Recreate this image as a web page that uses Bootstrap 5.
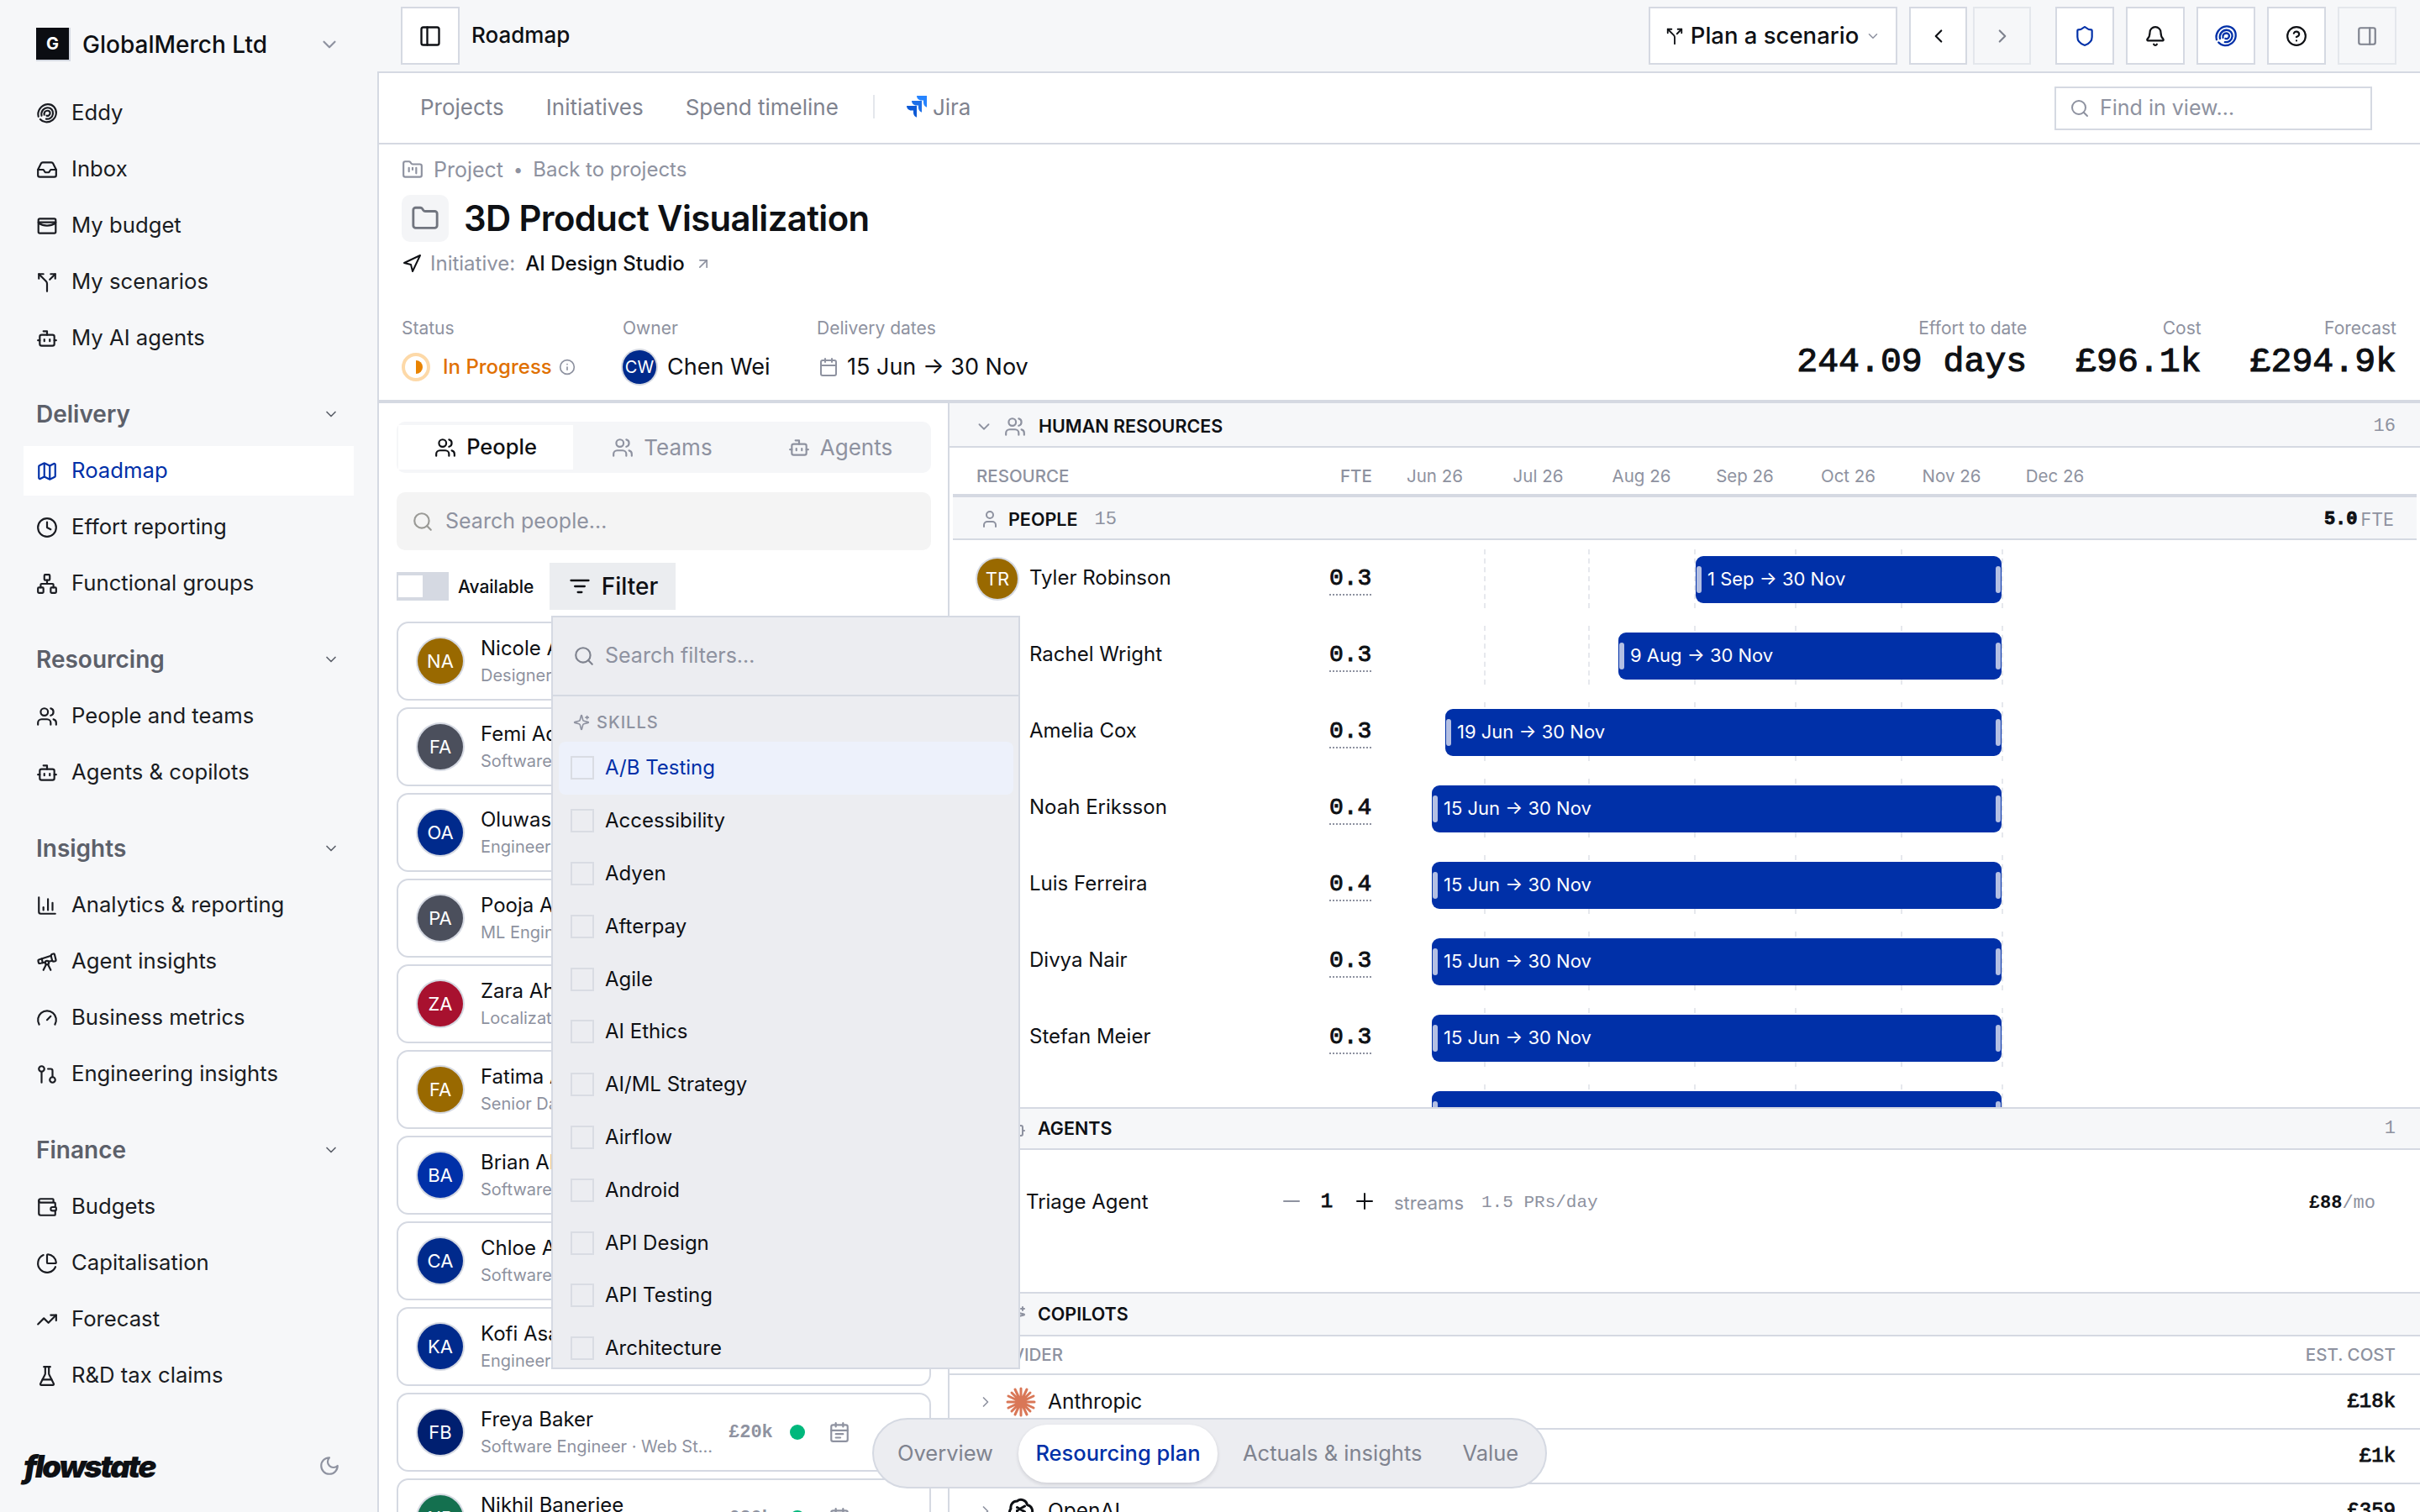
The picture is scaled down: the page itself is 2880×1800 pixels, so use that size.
<!DOCTYPE html>
<html lang="en">
<head>
  <meta charset="UTF-8">
  <meta name="viewport" content="width=device-width, initial-scale=1.0">
  <title>Roadmap - 3D Product Visualization</title>
  <link href="https://cdn.jsdelivr.net/npm/bootstrap@5.3.2/dist/css/bootstrap.min.css" rel="stylesheet">
  <style>
    html, body { height: 100%; }
    body { font-family: "Inter", "Liberation Sans", sans-serif; color: #0e1014; background: #f6f7f9; overflow: hidden; font-size: 25.7px; }
    .ico { fill: none; stroke: currentColor; stroke-width: 2; stroke-linecap: round; stroke-linejoin: round; flex: none; }
    .mono { font-family: "Liberation Mono", monospace; }
    .mono-strong { font-family: "Liberation Mono", monospace; -webkit-text-stroke: .9px currentColor; }
    .muted { color: #8e92a0; }
    .app { height: 1800px; position: relative; }

    /* sidebar */
    .side { width: 449px; flex: none; padding: 0 28px; height: 1800px; }
    .brand { height: 105px; padding-left: 15px; font-size: 28px; font-weight: 500; padding-right: 16px; }
    .brand-box { width: 41px; height: 40px; background: #0b0d12; color: #fff; font-size: 20px; font-weight: 700; border: 2px solid #d5d9e2; border-top: 0; border-left: 0; margin-right: 14px; }
    .side-item { height: 59px; margin-bottom: 8px; padding-left: 15px; gap: 16px; color: #1a1c22; text-decoration: none; }
    .side-item.on { background: #fff; color: #0030a8; }
    .side-head { height: 59px; margin: 23px 0 9px; padding: 0 17px 0 15px; font-size: 28px; font-weight: 600; color: #5c606a; }
    .logo { font-size: 37px; font-weight: 900; font-style: italic; letter-spacing: -2.6px; line-height: 1; }
    .side-foot { margin-top: auto; height: 110px; padding: 0 16px 0 0; }

    /* top */
    .top { height: 87px; border-bottom: 2px solid #d5d9e2; padding: 0 28px; }
    .tool { width: 70px; height: 69px; padding: 0; border: 2px solid #d5d9e2; border-radius: 0; background: #fff; color: #0e1014; }
    .tool.off { background: #f6f7f9; color: #7f838f; border-color: #e4e7ec; }
    .tool.blue { color: #0030a8; }
    .tool-group { gap: 14px; }
    .step-group { gap: 7px; }
    .step-group .tool { width: 69px; }
    .plan { width: 296px; height: 69px; border: 2px solid #d5d9e2; border-radius: 0; background: #fff; font-size: 27.5px; font-weight: 500; color: #0e1014; padding: 0; gap: 8px; }
    .content { background: #fff; border-left: 2px solid #d5d9e2; height: 1713px; }
    .tabs { height: 85px; border-bottom: 2px solid #d5d9e2; padding: 0 57px 3px 49px; color: #7f838f; gap: 50px; font-size: 26px; }
    .find { width: 378px; height: 52px; border: 2px solid #d5d9e2; padding-left: 16px; gap: 12px; color: #8e92a0; margin-top: 3px; }
    .find-input { border: 0; padding: 0; font-size: 25px; box-shadow: none !important; background: transparent; }
    .find-input::placeholder, .people-input::placeholder, .pop-input::placeholder { color: #8e92a0; opacity: 1; }

    /* page head */
    .head { height: 308px; border-bottom: 4px solid #d5d9e2; padding: 16px 28px 0 27px; position: relative; }
    .crumb { height: 28px; font-size: 24px; line-height: 28px; color: #8e92a0; }
    .title-box { width: 56px; height: 56px; background: #f4f5f7; border-radius: 10px; color: #71757f; }
    .title-text { font-size: 41.8px; font-weight: 600; letter-spacing: -.6px; margin: 0; line-height: 56px; }
    .lbl { font-size: 21px; color: #8e92a0; line-height: 26px; }
    .val { font-size: 27px; height: 48px; }
    .stat { font-size: 41.5px; line-height: 48px; margin-top: 3px; -webkit-text-stroke-width: 1.1px; }
    .round-av { border-radius: 50%; color: #fff; box-shadow: 0 0 0 2px #d5d9e2; flex: none; }

    /* split */
    .split { position: relative; height: 1320px; }
    .left { width: 679px; flex: none; border-right: 2px solid #d5d9e2; padding: 22px 20px 0 21px; overflow: hidden; }
    .seg { height: 61px; background: #f5f6f8; border-radius: 10px; padding: 4px 2px; font-size: 26px; color: #8e92a0; }
    .seg > div { flex: 1; gap: 12px; }
    .seg .on { background: #fff; color: #0e1014; font-weight: 500; flex: none; width: 208px; font-size: 25.5px; }
    .people-search { height: 69px; background: #f4f4f4; border-radius: 10px; margin-top: 23px; padding-left: 18px; gap: 14px; color: #9a9a96; }
    .people-input { border: 0; background: transparent; font-size: 25px; padding: 0; box-shadow: none !important; }
    .avail-toggle { width: 62px; height: 34px; background: #d5d9e2; padding: 4px 0 4px 2px; }
    .avail-toggle i { display: block; width: 29px; height: 26px; background: #fff; }
    .filter-btn { width: 150px; height: 56px; background: #ebedf0; border: 0; border-radius: 0; font-size: 28px; font-weight: 500; gap: 12px; padding: 0; color: #0e1014; }
    .p-card { height: 94px; border: 2px solid #d5d9e2; border-radius: 14px; margin-bottom: 8px; padding: 0 0 0 23px; flex-direction: row; align-items: center; }
    .p-av { width: 54px; height: 54px; font-size: 22px; }
    .p-name { font-size: 24px; line-height: 34px; white-space: nowrap; }
    .p-sub { font-size: 20px; line-height: 30px; color: #8e92a0; white-space: nowrap; }
    .p-meta { position: absolute; left: 393px; top: 0; bottom: 0; width: 160px; gap: 20px; }
    .p-dot { width: 18px; height: 18px; border-radius: 50%; background: #00b87c; }

    /* popover */
    .pop { position: absolute; left: 205px; top: 253px; width: 558px; height: 897px; background: #ecedf1; border: 2px solid #d5d9e2; z-index: 5; overflow: hidden; }
    .pop-search { height: 94px; border-bottom: 2px solid #d5d9e2; padding-left: 24px; gap: 12px; color: #7f838f; }
    .pop-input { border: 0; background: transparent; font-size: 25px; padding: 0; box-shadow: none !important; }
    .pop-head { height: 54px; padding: 7px 0 0 24px; font-size: 20px; font-weight: 500; letter-spacing: 1px; color: #8e92a0; gap: 8px; }
    .pop-row { height: 62.8px; padding-left: 14px; margin: 0 6px 0 7px; gap: 13px; font-size: 24px; border-radius: 8px; }
    .pop-row.on { color: #0030a8; background: #edf1fb; }
    .pop-check { width: 28px; height: 28px; border: 2px solid #d9dce3; }

    /* gantt */
    .right { min-width: 0; overflow: hidden; }
    .res-head { height: 53px; background: #f6f7f9; border-bottom: 2px solid #d5d9e2; padding: 4px 29px 0 30px; font-size: 21.5px; font-weight: 600; }
    .res-count { font-size: 22px; font-weight: 400; color: #8e92a0; }
    .col-head { height: 59px; margin: 0 4px; border-bottom: 4px solid #d5d9e2; padding: 14px 0 0 28px; font-size: 20.5px; color: #8e92a0; font-weight: 500; }
    .month { width: 123px; text-align: center; font-weight: 400; font-size: 20.5px; flex: none; }
    .sub-head { height: 51px; margin: 0 4px; background: #f6f7f9; border-bottom: 2px solid #d5d9e2; padding: 3px 27px 0 32px; font-size: 21.5px; font-weight: 600; }
    .rows { height: 675px; overflow: hidden; padding: 11px 4px 0; }
    .g-row { height: 70px; margin-bottom: 21px; padding-left: 29px; }
    .g-name { width: 419px; gap: 14px; flex: none; font-size: 24px; }
    .g-name > span { margin-top: -3px; }
    .g-av { width: 48px; height: 48px; font-size: 22px; }
    .g-fte { width: 50px; margin: 2px 12px 0 0; font-size: 28px; line-height: 36px; border-bottom: 2px dotted #8e92a0; flex: none; }
    .track { position: relative; height: 70px; }
    .track > span { display: block; height: 70px; border-right: 2px dashed #e6e8ed; flex: none; }
    .bar { position: absolute; top: 8px; height: 56px; background: #0030a8; color: #fff; border-radius: 9px; font-size: 22px; padding: 0 0 2px 14px; display: flex; align-items: center; white-space: nowrap; }
    .bar::before, .bar::after { content: ""; position: absolute; top: 12px; height: 32px; width: 6px; border-radius: 3px; background: #b3bfe3; }
    .bar::before { left: 1px; }
    .bar::after { right: 1px; }
    .sec-head { height: 53px; background: #f6f7f9; border-top: 2px solid #d5d9e2; border-bottom: 2px solid #d5d9e2; padding: 0 29px 0 67px; font-size: 21.5px; font-weight: 600; }
    .sec-head.first { height: 51px; }
    .agent-row { height: 169px; padding: 44px 29px 0 91px; font-size: 24px; }
    .agent-name { width: 304px; }
    .prov-head { height: 46px; border-bottom: 2px solid #d5d9e2; padding: 0 29px 0 33px; font-size: 20.5px; color: #8e92a0; font-weight: 500; }
    .prov-row { height: 65px; border-bottom: 2px solid #d5d9e2; padding: 0 29px 0 33px; font-size: 24.5px; }
    .prov-cost { font-size: 24px; }

    /* bottom pill */
    .pill { position: absolute; left: 1038px; top: 1688px; width: 803px; height: 84px; border-radius: 42px; background: #ecedf1; border: 2px solid #d5d9e2; z-index: 6; padding-left: 28px; font-size: 25.5px; color: #7f838f; white-space: nowrap; }
    .pill-on { width: 237px; height: 69px; background: #fff; color: #0030a8; font-weight: 500; font-size: 25.5px; border-radius: 34px; box-shadow: 0 2px 4px rgba(20, 24, 40, .14); margin: 0 30px 0 30px; flex: none; }
  </style>
</head>
<body>
  <svg width="0" height="0" class="position-absolute">
    <symbol id="i-eddy" viewBox="0 0 24 24"><path d="M2.5 15.5C1 10 5 2.500 12.500 2c6-.4 10 4.500 9.500 10-.5 6-6 10-11.500 9.500-2.500-.2-4.500-1.300-6-3"/><path d="M6 14.500C5 10 8 6 12.500 5.800c4-.2 6.300 3 6 6.500-.4 4-4 6.300-7.500 5.800"/><path d="M9 13.500c-.6-2.500 1-4.500 3.500-4.500 2 0 3 1.500 2.800 3.200-.2 2-2.300 2.800-3.800 2.300"/></symbol>
    <symbol id="i-inbox" viewBox="0 0 24 24"><path d="M22 12h-6l-2 3h-4l-2-3H2"/><path d="M5.45 5.11 2 12v6a2 2 0 0 0 2 2h16a2 2 0 0 0 2-2v-6l-3.45-6.89A2 2 0 0 0 16.76 4H7.24a2 2 0 0 0-1.79 1.11z"/></symbol>
    <symbol id="i-budget" viewBox="0 0 24 24"><rect x="2.5" y="4" width="19" height="16" rx="1.5"/><path d="M2.5 8h19"/><path d="M3 9c5 3.5 13 3.5 18 0"/></symbol>
    <symbol id="i-split" viewBox="0 0 24 24"><path d="M16 3h5v5"/><path d="M8 3H3v5"/><path d="M12 22v-8.3a4 4 0 0 0-1.172-2.872L3 3"/><path d="m15 9 6-6"/></symbol>
    <symbol id="i-bot" viewBox="0 0 24 24"><path d="M12 8V4H8"/><rect x="4" y="8" width="16" height="12" rx="2"/><path d="M2 14h2"/><path d="M20 14h2"/><path d="M15 13v2"/><path d="M9 13v2"/></symbol>
    <symbol id="i-map" viewBox="0 0 24 24"><path d="M14.106 5.553a2 2 0 0 0 1.788 0l3.659-1.83A1 1 0 0 1 21 4.619v12.764a1 1 0 0 1-.553.894l-4.553 2.277a2 2 0 0 1-1.788 0l-4.212-2.106a2 2 0 0 0-1.788 0l-3.659 1.83A1 1 0 0 1 3 19.381V6.618a1 1 0 0 1 .553-.894l4.553-2.277a2 2 0 0 1 1.788 0z"/><path d="M15 5.764v15"/><path d="M9 3.236v15"/></symbol>
    <symbol id="i-clock" viewBox="0 0 24 24"><circle cx="12" cy="12" r="10"/><path d="M12 6v6l4 2"/></symbol>
    <symbol id="i-network" viewBox="0 0 24 24"><rect x="16" y="16" width="6" height="6" rx="1"/><rect x="2" y="16" width="6" height="6" rx="1"/><rect x="9" y="2" width="6" height="6" rx="1"/><path d="M5 16v-3a1 1 0 0 1 1-1h12a1 1 0 0 1 1 1v3"/><path d="M12 12V8"/></symbol>
    <symbol id="i-users" viewBox="0 0 24 24"><path d="M16 21v-2a4 4 0 0 0-4-4H6a4 4 0 0 0-4 4v2"/><circle cx="9" cy="7" r="4"/><path d="M22 21v-2a4 4 0 0 0-3-3.87"/><path d="M16 3.13a4 4 0 0 1 0 7.75"/></symbol>
    <symbol id="i-chart" viewBox="0 0 24 24"><path d="M3 3v16a2 2 0 0 0 2 2h16"/><path d="M18 17V9"/><path d="M13 17V5"/><path d="M8 17v-3"/></symbol>
    <symbol id="i-scope" viewBox="0 0 24 24"><path d="m10.065 12.493-6.18 1.318a.934.934 0 0 1-1.108-.702l-.537-2.15a1.07 1.07 0 0 1 .691-1.265l13.504-4.44"/><path d="m13.56 11.747 4.332-.924"/><path d="m16 21-3.105-6.21"/><path d="M16.485 5.94a2 2 0 0 1 1.455-2.425l1.09-.272a1 1 0 0 1 1.212.727l1.515 6.06a1 1 0 0 1-.727 1.213l-1.09.272a2 2 0 0 1-2.425-1.455z"/><path d="m6.158 8.633 1.114 4.456"/><path d="m8 21 3.105-6.21"/><circle cx="12" cy="13" r="2"/></symbol>
    <symbol id="i-gauge" viewBox="0 0 24 24"><path d="m12 14 4-4"/><path d="M3.34 19a10 10 0 1 1 17.32 0"/></symbol>
    <symbol id="i-pull" viewBox="0 0 24 24"><circle cx="6" cy="6" r="3"/><path d="M6 9v12"/><path d="M13 6h3a2 2 0 0 1 2 2v7"/><circle cx="18" cy="18" r="3"/></symbol>
    <symbol id="i-wallet" viewBox="0 0 24 24"><path d="M19 7V4a1 1 0 0 0-1-1H5a2 2 0 0 0 0 4h15a1 1 0 0 1 1 1v4h-3a2 2 0 0 0 0 4h3a1 1 0 0 0 1-1v-2a1 1 0 0 0-1-1"/><path d="M3 5v14a2 2 0 0 0 2 2h15a1 1 0 0 0 1-1v-4"/></symbol>
    <symbol id="i-pie" viewBox="0 0 24 24"><path d="M21 12c.552 0 1.005-.449.95-.998a10 10 0 0 0-8.953-8.951c-.55-.055-.998.398-.998.95v8a1 1 0 0 0 1 1z"/><path d="M21.21 15.89A10 10 0 1 1 8 2.83"/></symbol>
    <symbol id="i-trend" viewBox="0 0 24 24"><path d="M16 7h6v6"/><path d="m22 7-8.5 8.5-5-5L2 17"/></symbol>
    <symbol id="i-flask" viewBox="0 0 24 24"><path d="M10 2v7.527a2 2 0 0 1-.211.896L4.72 20.55a1 1 0 0 0 .9 1.45h12.76a1 1 0 0 0 .9-1.45l-5.069-10.127A2 2 0 0 1 14 9.527V2"/><path d="M8.5 2h7"/><path d="M7 16h10"/></symbol>
    <symbol id="i-moon" viewBox="0 0 24 24"><path d="M12 3a6 6 0 0 0 9 9 9 9 0 1 1-9-9Z"/></symbol>
    <symbol id="i-down" viewBox="0 0 24 24"><path d="m6 9 6 6 6-6"/></symbol>
    <symbol id="i-left" viewBox="0 0 24 24"><path d="m15 18-6-6 6-6"/></symbol>
    <symbol id="i-right" viewBox="0 0 24 24"><path d="m9 18 6-6-6-6"/></symbol>
    <symbol id="i-panel-l" viewBox="0 0 24 24"><rect x="3" y="3" width="18" height="18" rx="2"/><path d="M9 3v18"/></symbol>
    <symbol id="i-panel-r" viewBox="0 0 24 24"><rect x="3" y="3" width="18" height="18" rx="2"/><path d="M15 3v18"/></symbol>
    <symbol id="i-shield" viewBox="0 0 24 24"><path d="M20 13c0 5-3.5 7.5-7.66 8.95a1 1 0 0 1-.67-.01C7.5 20.5 4 18 4 13V6a1 1 0 0 1 1-1c2 0 4.5-1.2 6.24-2.72a1.17 1.17 0 0 1 1.52 0C14.51 3.81 17 5 19 5a1 1 0 0 1 1 1z"/></symbol>
    <symbol id="i-bell" viewBox="0 0 24 24"><path d="M10.268 21a2 2 0 0 0 3.464 0"/><path d="M3.262 15.326A1 1 0 0 0 4 17h16a1 1 0 0 0 .74-1.673C19.41 13.956 18 12.499 18 8A6 6 0 0 0 6 8c0 4.499-1.411 5.956-2.738 7.326"/></symbol>
    <symbol id="i-help" viewBox="0 0 24 24"><circle cx="12" cy="12" r="10"/><path d="M9.09 9a3 3 0 0 1 5.83 1c0 2-3 3-3 3"/><path d="M12 17h.01"/></symbol>
    <symbol id="i-search" viewBox="0 0 24 24"><circle cx="11" cy="11" r="8"/><path d="m21 21-4.3-4.3"/></symbol>
    <symbol id="i-folder" viewBox="0 0 24 24"><path d="M20 20a2 2 0 0 0 2-2V8a2 2 0 0 0-2-2h-7.9a2 2 0 0 1-1.69-.9L9.6 3.9A2 2 0 0 0 7.93 3H4a2 2 0 0 0-2 2v13a2 2 0 0 0 2 2Z"/></symbol>
    <symbol id="i-kanban" viewBox="0 0 24 24"><path d="M20 20a2 2 0 0 0 2-2V8a2 2 0 0 0-2-2h-7.9a2 2 0 0 1-1.69-.9L9.6 3.9A2 2 0 0 0 7.93 3H4a2 2 0 0 0-2 2v13a2 2 0 0 0 2 2Z"/><path d="M8 10v4"/><path d="M12 10v2"/><path d="M16 10v6"/></symbol>
    <symbol id="i-nav" viewBox="0 0 24 24"><path d="M3 11 22 2 13 21 11 13 3 11Z"/></symbol>
    <symbol id="i-out" viewBox="0 0 24 24"><path d="M7 7h10v10"/><path d="M7 17 17 7"/></symbol>
    <symbol id="i-info" viewBox="0 0 24 24"><circle cx="12" cy="12" r="10"/><path d="M12 16v-4"/><path d="M12 8h.01"/></symbol>
    <symbol id="i-cal" viewBox="0 0 24 24"><path d="M8 2v4"/><path d="M16 2v4"/><rect x="3" y="4" width="18" height="18" rx="2"/><path d="M3 10h18"/></symbol>
    <symbol id="i-cal-text" viewBox="0 0 24 24"><path d="M8 2v4"/><path d="M16 2v4"/><rect x="3" y="4" width="18" height="18" rx="2"/><path d="M3 10h18"/><path d="M8 14h8"/><path d="M8 18h5"/></symbol>
    <symbol id="i-filter" viewBox="0 0 24 24"><path d="M3 6h18"/><path d="M7 12h10"/><path d="M10 18h4"/></symbol>
    <symbol id="i-user" viewBox="0 0 24 24"><path d="M19 21v-2a4 4 0 0 0-4-4H9a4 4 0 0 0-4 4v2"/><circle cx="12" cy="7" r="4"/></symbol>
    <symbol id="i-spark" viewBox="0 0 24 24"><path d="M9.937 15.5A2 2 0 0 0 8.5 14.063l-6.135-1.582a.5.5 0 0 1 0-.962L8.5 9.936A2 2 0 0 0 9.937 8.5l1.582-6.135a.5.5 0 0 1 .963 0L14.063 8.5A2 2 0 0 0 15.5 9.937l6.135 1.581a.5.5 0 0 1 0 .964L15.5 14.063a2 2 0 0 0-1.437 1.437l-1.582 6.135a.5.5 0 0 1-.963 0z"/><path d="M20 3v4"/><path d="M22 5h-4"/></symbol>
  </svg>

  <div class="app d-flex">
    <aside class="side d-flex flex-column">
      <div class="brand d-flex align-items-center">
        <div class="brand-box d-flex align-items-center justify-content-center">G</div>
        <span>GlobalMerch Ltd</span>
        <svg class="ico ms-auto muted" width="26" height="26"><use href="#i-down"/></svg>
      </div>
      <a class="side-item d-flex align-items-center"><svg class="ico" width="26" height="26"><use href="#i-eddy"/></svg>Eddy</a>
      <a class="side-item d-flex align-items-center"><svg class="ico" width="26" height="26"><use href="#i-inbox"/></svg>Inbox</a>
      <a class="side-item d-flex align-items-center"><svg class="ico" width="26" height="26"><use href="#i-budget"/></svg>My budget</a>
      <a class="side-item d-flex align-items-center"><svg class="ico" width="26" height="26"><use href="#i-split"/></svg>My scenarios</a>
      <a class="side-item d-flex align-items-center"><svg class="ico" width="26" height="26"><use href="#i-bot"/></svg>My AI agents</a>

      <div class="side-head d-flex align-items-center justify-content-between">Delivery<svg class="ico" width="20" height="20"><use href="#i-down"/></svg></div>
      <a class="side-item on d-flex align-items-center"><svg class="ico" width="26" height="26"><use href="#i-map"/></svg>Roadmap</a>
      <a class="side-item d-flex align-items-center"><svg class="ico" width="26" height="26"><use href="#i-clock"/></svg>Effort reporting</a>
      <a class="side-item d-flex align-items-center"><svg class="ico" width="26" height="26"><use href="#i-network"/></svg>Functional groups</a>

      <div class="side-head d-flex align-items-center justify-content-between">Resourcing<svg class="ico" width="20" height="20"><use href="#i-down"/></svg></div>
      <a class="side-item d-flex align-items-center"><svg class="ico" width="26" height="26"><use href="#i-users"/></svg>People and teams</a>
      <a class="side-item d-flex align-items-center"><svg class="ico" width="26" height="26"><use href="#i-bot"/></svg>Agents &amp; copilots</a>

      <div class="side-head d-flex align-items-center justify-content-between">Insights<svg class="ico" width="20" height="20"><use href="#i-down"/></svg></div>
      <a class="side-item d-flex align-items-center"><svg class="ico" width="26" height="26"><use href="#i-chart"/></svg>Analytics &amp; reporting</a>
      <a class="side-item d-flex align-items-center"><svg class="ico" width="26" height="26"><use href="#i-scope"/></svg>Agent insights</a>
      <a class="side-item d-flex align-items-center"><svg class="ico" width="26" height="26"><use href="#i-gauge"/></svg>Business metrics</a>
      <a class="side-item d-flex align-items-center"><svg class="ico" width="26" height="26"><use href="#i-pull"/></svg>Engineering insights</a>

      <div class="side-head d-flex align-items-center justify-content-between">Finance<svg class="ico" width="20" height="20"><use href="#i-down"/></svg></div>
      <a class="side-item d-flex align-items-center"><svg class="ico" width="26" height="26"><use href="#i-wallet"/></svg>Budgets</a>
      <a class="side-item d-flex align-items-center"><svg class="ico" width="26" height="26"><use href="#i-pie"/></svg>Capitalisation</a>
      <a class="side-item d-flex align-items-center"><svg class="ico" width="26" height="26"><use href="#i-trend"/></svg>Forecast</a>
      <a class="side-item d-flex align-items-center"><svg class="ico" width="26" height="26"><use href="#i-flask"/></svg>R&amp;D tax claims</a>

      <div class="side-foot d-flex align-items-center justify-content-between">
        <span class="logo">flowstate</span>
        <svg class="ico muted" width="26" height="26"><use href="#i-moon"/></svg>
      </div>
    </aside>

    <main class="flex-grow-1" style="min-width:0">
      <div class="top d-flex align-items-center">
        <button class="btn tool d-flex align-items-center justify-content-center"><svg class="ico" width="28" height="28"><use href="#i-panel-l"/></svg></button>
        <span class="fw-medium" style="margin:-3px 0 0 14px;font-size:26px">Roadmap</span>
        <div class="d-flex align-items-center tool-group ms-auto">
          <button class="btn plan d-flex align-items-center justify-content-center">
            <svg class="ico" width="22" height="22"><use href="#i-split"/></svg>Plan a scenario<svg class="ico muted" width="18" height="18"><use href="#i-down"/></svg>
          </button>
          <div class="d-flex step-group">
            <button class="btn tool d-flex align-items-center justify-content-center"><svg class="ico" width="26" height="26"><use href="#i-left"/></svg></button>
            <button class="btn tool off d-flex align-items-center justify-content-center"><svg class="ico" width="26" height="26"><use href="#i-right"/></svg></button>
          </div>
        </div>
        <div class="d-flex tool-group" style="margin-left:29px">
          <button class="btn tool blue d-flex align-items-center justify-content-center"><svg class="ico" width="26" height="26"><use href="#i-shield"/></svg></button>
          <button class="btn tool d-flex align-items-center justify-content-center"><svg class="ico" width="26" height="26"><use href="#i-bell"/></svg></button>
          <button class="btn tool blue d-flex align-items-center justify-content-center"><svg class="ico" width="28" height="28"><use href="#i-eddy"/></svg></button>
          <button class="btn tool d-flex align-items-center justify-content-center"><svg class="ico" width="26" height="26"><use href="#i-help"/></svg></button>
          <button class="btn tool off d-flex align-items-center justify-content-center"><svg class="ico" width="26" height="26"><use href="#i-panel-r"/></svg></button>
        </div>
      </div>

      <div class="content">
        <div class="tabs d-flex align-items-center">
          <span>Projects</span><span>Initiatives</span><span>Spend timeline</span>
          <span class="d-flex align-items-center" style="gap:37px;margin-left:-9px">
            <span style="width:2px;height:28px;background:#e4e7ec"></span>
            <span class="d-flex align-items-center" style="gap:6px">
              <svg width="26" height="28" viewBox="0 0 26 28"><path fill="#2684ff" d="M25 1H13c0 3 2.5 5.5 5.500 5.500H21v2.400c0 3 2.400 5.500 4 5.500z"/><path fill="#1d6fe8" d="M19 7H7c0 3 2.500 5.500 5.500 5.500H15v2.400c0 3 2.400 5.500 4 5.500z"/><path fill="#0d5ad6" d="M13 13H1c0 3 2.500 5.500 5.500 5.500H9v2.400c0 3 2.400 5.500 4 5.500z"/></svg>
              Jira
            </span>
          </span>
          <div class="find d-flex align-items-center ms-auto">
            <svg class="ico" width="24" height="24"><use href="#i-search"/></svg>
            <input class="form-control find-input" placeholder="Find in view…">
          </div>
        </div>

        <div class="head">
          <div class="crumb d-flex align-items-center">
            <svg class="ico" width="26" height="26"><use href="#i-kanban"/></svg>
            <span style="margin-left:12px;font-size:25px">Project</span><span style="font-size:20px;margin:0 12px">&bull;</span><span>Back to projects</span>
          </div>
          <div class="d-flex align-items-center" style="margin-top:16px;gap:18px">
            <div class="title-box d-flex align-items-center justify-content-center"><svg class="ico" width="34" height="34"><use href="#i-folder"/></svg></div>
            <h1 class="title-text">3D Product Visualization</h1>
          </div>
          <div class="d-flex align-items-center" style="margin-top:9px;height:34px;font-size:24px">
            <svg class="ico" width="24" height="24"><use href="#i-nav"/></svg>
            <span class="muted" style="margin-left:10px">Initiative:</span>
            <span class="fw-medium" style="margin-left:12px">AI Design Studio</span>
            <svg class="ico muted" style="margin-left:12px" width="20" height="20"><use href="#i-out"/></svg>
          </div>
          <div class="d-flex" style="margin-top:47px">
            <div style="width:263px">
              <div class="lbl">Status</div>
              <div class="val d-flex align-items-center" style="margin-top:9px">
                <svg width="34" height="34" viewBox="0 0 34 34"><circle cx="17" cy="17" r="15" fill="#fff" stroke="#fdd9a8" stroke-width="4"/><path d="M17 9a8 8 0 0 1 0 16z" fill="#e98300"/></svg>
                <span class="fw-medium" style="margin-left:15px;font-size:24px;color:#e07000">In Progress</span>
                <svg class="ico muted" style="margin-left:8px" width="20" height="20"><use href="#i-info"/></svg>
              </div>
            </div>
            <div style="width:231px">
              <div class="lbl">Owner</div>
              <div class="val d-flex align-items-center" style="margin-top:9px">
                <div class="round-av d-flex align-items-center justify-content-center" style="width:40px;height:40px;background:#002a8c;font-size:20px">CW</div>
                <span style="margin-left:13px">Chen Wei</span>
              </div>
            </div>
            <div>
              <div class="lbl">Delivery dates</div>
              <div class="val d-flex align-items-center" style="margin-top:9px">
                <svg class="ico muted" style="margin-left:2px" width="24" height="24"><use href="#i-cal"/></svg>
                <span style="margin-left:10px">15 Jun &rarr; 30 Nov</span>
              </div>
            </div>
            <div class="ms-auto d-flex text-end" style="gap:58px">
              <div><div class="lbl">Effort to date</div><div class="stat mono-strong">244.09 days</div></div>
              <div><div class="lbl">Cost</div><div class="stat mono-strong">&pound;96.1k</div></div>
              <div><div class="lbl">Forecast</div><div class="stat mono-strong">&pound;294.9k</div></div>
            </div>
          </div>
        </div>

        <div class="split d-flex">
          <section class="left">
            <div class="seg d-flex align-items-stretch">
              <div class="on d-flex align-items-center justify-content-center"><svg class="ico" width="26" height="26"><use href="#i-users"/></svg>People</div>
              <div class="d-flex align-items-center justify-content-center"><svg class="ico" width="26" height="26"><use href="#i-users"/></svg>Teams</div>
              <div class="d-flex align-items-center justify-content-center"><svg class="ico" width="26" height="26"><use href="#i-bot"/></svg>Agents</div>
            </div>
            <div class="people-search d-flex align-items-center">
              <svg class="ico" width="26" height="26"><use href="#i-search"/></svg>
              <input class="form-control people-input" placeholder="Search people…">
            </div>
            <div class="d-flex align-items-center" style="margin-top:15px;height:56px">
              <div class="avail-toggle"><i></i></div>
              <span class="fw-medium" style="font-size:21px;margin:2px 19px 0 11px">Available</span>
              <button class="btn filter-btn d-flex align-items-center justify-content-center"><svg class="ico" width="28" height="28"><use href="#i-filter"/></svg>Filter</button>
            </div>
            <div id="people" style="margin-top:14px"></div>
          </section>

          <section class="right flex-grow-1">
            <div class="res-head d-flex align-items-center">
              <svg class="ico muted" width="22" height="22"><use href="#i-down"/></svg>
              <svg class="ico muted" style="margin-left:13px" width="26" height="26"><use href="#i-users"/></svg>
              <span style="margin-left:15px">HUMAN RESOURCES</span>
              <span class="res-count mono ms-auto">16</span>
            </div>
            <div class="col-head d-flex align-items-center">
              <span style="width:433px">RESOURCE</span>
              <span class="text-end" style="width:37px;margin-right:14px">FTE</span>
              <div id="months" class="d-flex"></div>
            </div>
            <div class="sub-head d-flex align-items-center">
              <svg class="ico muted" width="24" height="24"><use href="#i-user"/></svg>
              <span style="margin-left:10px">PEOPLE</span>
              <span class="mono muted fw-normal" style="margin-left:20px;font-size:22px">15</span>
              <span class="ms-auto mono-strong" style="font-size:22px">5.0</span>
              <span class="muted fw-normal" style="margin-left:4px">FTE</span>
            </div>
            <div id="rows" class="rows"></div>

            <div class="sec-head first d-flex align-items-center">
              <svg class="ico muted" width="24" height="24"><use href="#i-bot"/></svg>
              <span style="margin-left:14px">AGENTS</span>
              <span class="res-count mono ms-auto">1</span>
            </div>
            <div class="agent-row d-flex align-items-start">
              <span class="agent-name">Triage Agent</span>
              <svg class="ico muted" width="24" height="34" viewBox="0 0 24 34"><path d="M3 17h18"/></svg>
              <span class="mono-strong text-center" style="width:60px">1</span>
              <svg class="ico" style="margin-left:3px" width="24" height="34" viewBox="0 0 24 34"><path d="M3 17h18"/><path d="M12 8v18"/></svg>
              <span class="muted" style="font-size:22px;margin:3px 0 0 23px">streams</span>
              <span class="mono muted" style="font-size:21px;margin:3px 0 0 21px">1.5 PRs/day</span>
              <span class="ms-auto mono" style="font-size:22px;margin:3px 24px 0 0"><b>&pound;88</b><span class="muted">/mo</span></span>
            </div>
            <div class="sec-head d-flex align-items-center">
              <svg class="ico muted" width="24" height="24"><use href="#i-spark"/></svg>
              <span style="margin-left:14px">COPILOTS</span>
            </div>
            <div class="prov-head d-flex align-items-center justify-content-between"><span>PROVIDER</span><span>EST. COST</span></div>
            <div class="prov-row d-flex align-items-center">
              <svg class="ico muted" width="20" height="20"><use href="#i-right"/></svg>
              <svg width="36" height="36" viewBox="0 0 36 36" style="margin-left:14px;stroke:#d97757;stroke-width:3;stroke-linecap:round"><path d="M18 2v32M2 18h32M7 7l22 22M29 7 7 29M11 3l14 30M25 3 11 33M3 11l30 14M33 11 3 25"/></svg>
              <span style="margin-left:14px">Anthropic</span>
              <span class="ms-auto mono-strong prov-cost">&pound;18k</span>
            </div>
            <div class="prov-row d-flex align-items-center">
              <svg class="ico muted" width="20" height="20"><use href="#i-right"/></svg>
              <span class="ms-auto mono-strong prov-cost">&pound;1k</span>
            </div>
            <div class="prov-row d-flex align-items-center">
              <svg class="ico muted" width="20" height="20"><use href="#i-right"/></svg>
              <svg class="ico" style="margin-left:14px" width="36" height="36" viewBox="0 0 24 24"><path d="M9 4a5 5 0 0 1 8 3 5 5 0 0 1 3 8 5 5 0 0 1-5 6 5 5 0 0 1-8-3 5 5 0 0 1-3-8 5 5 0 0 1 5-6z"/><path d="m9 9 6 3.5v4M15 8l-6 3.5v5"/></svg>
              <span style="margin-left:14px">OpenAI</span>
              <span class="ms-auto mono-strong prov-cost">&pound;359</span>
            </div>
          </section>

          <div class="pop">
            <div class="pop-search d-flex align-items-center">
              <svg class="ico" width="26" height="26"><use href="#i-search"/></svg>
              <input class="form-control pop-input" placeholder="Search filters…">
            </div>
            <div class="pop-head d-flex align-items-center">
              <svg class="ico" width="20" height="20"><use href="#i-spark"/></svg>SKILLS
            </div>
            <div id="filters"></div>
          </div>
        </div>
      </div>
    </main>

    <div class="pill d-flex align-items-center">
      <span>Overview</span>
      <span class="pill-on d-flex align-items-center justify-content-center">Resourcing plan</span>
      <span>Actuals &amp; insights</span>
      <span style="margin-left:48px">Value</span>
    </div>
  </div>

  <script src="https://cdn.jsdelivr.net/npm/bootstrap@5.3.2/dist/js/bootstrap.bundle.min.js"></script>
  <script>
    const people = [
      ["NA", "Nicole Adams", "Designer", "#996900"],
      ["FA", "Femi Adeyemi", "Software Engineer", "#4b4f5c"],
      ["OA", "Oluwaseun Adebayo", "Engineer", "#002a8c"],
      ["PA", "Pooja Agarwal", "ML Engineer", "#4b4f5c"],
      ["ZA", "Zara Ahmed", "Localization Lead", "#a8112f"],
      ["FA", "Fatima Al-Sayed", "Senior Data Analyst", "#996900"],
      ["BA", "Brian Allen", "Software Engineer", "#0030a8"],
      ["CA", "Chloe Anderson", "Software Engineer", "#002a8c"],
      ["KA", "Kofi Asante", "Engineer", "#002a8c"],
      ["FB", "Freya Baker", "Software Engineer · Web St...", "#001f70"],
      ["NB", "Nikhil Banerjee", "Software Engineer", "#14704f"]
    ];
    document.getElementById("people").innerHTML = people.map(p => `
      <div class="card p-card position-relative">
        <div class="round-av p-av d-flex align-items-center justify-content-center" style="background:${p[3]}">${p[0]}</div>
        <div style="margin-left:21px">
          <div class="p-name">${p[1]}</div>
          <div class="p-sub">${p[2]}</div>
        </div>
        <div class="p-meta d-flex align-items-center">
          <span class="mono muted fw-bold" style="font-size:22px">£20k</span>
          <span class="p-dot"></span>
          <svg class="ico muted ms-2" width="26" height="26"><use href="#i-cal-text"/></svg>
        </div>
      </div>`).join("");

    const filters = ["A/B Testing", "Accessibility", "Adyen", "Afterpay", "Agile", "AI Ethics", "AI/ML Strategy", "Airflow", "Android", "API Design", "API Testing", "Architecture"];
    document.getElementById("filters").innerHTML = filters.map((f, i) => `
      <div class="pop-row d-flex align-items-center ${i === 0 ? "on" : ""}"><span class="pop-check"></span>${f}</div>`).join("");

    document.getElementById("months").innerHTML = ["Jun 26", "Jul 26", "Aug 26", "Sep 26", "Oct 26", "Nov 26", "Dec 26"]
      .map(m => `<span class="month">${m}</span>`).join("");

    // x offsets are measured from the start of the timeline, 1644px on the page
    const cells = [124, 124, 126, 120, 126, 120];
    const rows = [
      ["TR", "Tyler Robinson", "0.3", 374, "1 Sep → 30 Nov", "#996900"],
      ["RW", "Rachel Wright", "0.3", 282, "9 Aug → 30 Nov", "#002a8c"],
      ["AC", "Amelia Cox", "0.3", 76, "19 Jun → 30 Nov", "#a8112f"],
      ["NE", "Noah Eriksson", "0.4", 60, "15 Jun → 30 Nov", "#0030a8"],
      ["LF", "Luis Ferreira", "0.4", 60, "15 Jun → 30 Nov", "#14704f"],
      ["DN", "Divya Nair", "0.3", 60, "15 Jun → 30 Nov", "#4b4f5c"],
      ["SM", "Stefan Meier", "0.3", 60, "15 Jun → 30 Nov", "#002a8c"],
      ["HC", "", "", 60, "", "#996900"]
    ];
    const barEnd = 738;
    document.getElementById("rows").innerHTML = rows.map(r => `
      <div class="g-row d-flex align-items-center">
        <div class="g-name d-flex align-items-center">
          <div class="round-av g-av d-flex align-items-center justify-content-center" style="background:${r[5]}">${r[0]}</div>
          <span>${r[1]}</span>
        </div>
        <span class="g-fte mono-strong">${r[2]}</span>
        <div class="track d-flex">
          ${cells.map(w => `<span style="width:${w}px"></span>`).join("")}
          <div class="bar" style="left:${r[3]}px;width:${barEnd - r[3]}px">${r[4]}</div>
        </div>
      </div>`).join("");
  </script>
</body>
</html>
